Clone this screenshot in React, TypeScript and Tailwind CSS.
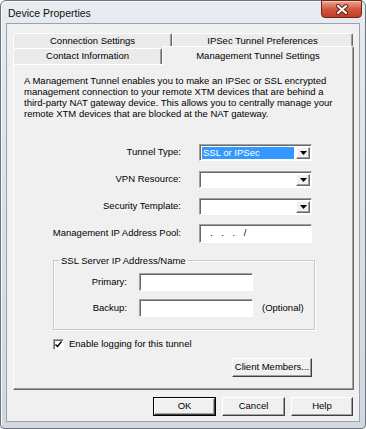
import React from "react";

const raised =
  "border border-t-white border-l-white border-r-[#696969] border-b-[#696969] shadow-[inset_-1px_-1px_0_#a0a0a0]";
const sunken =
  "border border-t-[#a0a0a0] border-l-[#a0a0a0] border-r-white border-b-white shadow-[inset_1px_1px_0_#696969]";

function Arrow() {
  return (
    <svg width="7" height="4" viewBox="0 0 7 4">
      <path d="M0 0h7L3.5 4z" fill="#000" />
    </svg>
  );
}

function Combo({ value }: { value?: string }) {
  return (
    <div className={`${sunken} bg-white h-[17px] w-[113px] flex pl-[2px] pr-[1px] pt-[2px] pb-[1px]`}>
      <div className="flex-1 flex pr-[2px]">
        {value && (
          <span className="bg-[#3399ff] text-white w-full flex items-center pl-[1px] leading-none">{value}</span>
        )}
      </div>
      <div className={`${raised} w-[14px] bg-[#f0f0f0] flex items-center justify-center`}>
        <Arrow />
      </div>
    </div>
  );
}

function Field({ w, h = 19, children }: { w: number; h?: number; children?: React.ReactNode }) {
  return (
    <div
      className={`${sunken} bg-white flex items-center pl-[10px] ${h === 19 ? "h-[19px]" : "h-[18px]"} ${
        w === 113 ? "w-[113px]" : "w-[114px]"
      }`}
    >
      {children}
    </div>
  );
}

function Button({ label, width, isDefault }: { label: string; width: string; isDefault?: boolean }) {
  return (
    <div className={`${width} h-[19px] ${isDefault ? "border border-black" : ""}`}>
      <div
        className={`h-full w-full bg-[#f0f0f0] flex items-center justify-center border border-t-white border-l-white border-r-[#404040] border-b-[#404040] shadow-[inset_-1px_-1px_0_#a0a0a0]`}
      >
        {label}
      </div>
    </div>
  );
}

function Tab({ label, width, selected }: { label: string; width: string; selected?: boolean }) {
  return (
    <div
      className={`${width} flex justify-center rounded-t-[2px] border border-b-0 border-t-white border-l-white border-r-[#696969] shadow-[inset_-1px_0_0_#a0a0a0] ${
        selected
          ? "h-[19px] -mt-[2px] relative z-10 bg-[#f0f0f0] pt-[2px]"
          : "h-full bg-[#ebebeb] items-center"
      }`}
    >
      {label}
    </div>
  );
}

function FormRow({ label, children, height }: { label: string; children: React.ReactNode; height: string }) {
  return (
    <div className={`flex items-center ${height}`}>
      <div className="w-[167px] text-right">{label}</div>
      <div className="ml-[18px]">{children}</div>
    </div>
  );
}

export default function App() {
  return (
    <div className="w-[366px] h-[429px] font-['Liberation_Sans',Arial,sans-serif] text-[9.5px] text-black">
      <div className="h-full w-full rounded-t-[6px] rounded-b-[4px] border border-[#6b7480] bg-gradient-to-b from-[#e8ebef] via-[#dde1e6] to-[#d3d8de] flex flex-col shadow-[inset_1px_1px_0_#f8f9fa]">
        {/* title bar */}
        <div className="h-[22px] flex items-start pl-[7px] pr-[3px]">
          <span className="mt-[5px] leading-[15px] text-[10.5px] text-[#111]">Device Properties</span>
          <div className="ml-auto -mt-[1px] w-[41px] h-[18px] rounded-b-[4px] border border-[#6e2414] bg-gradient-to-b from-[#e9a893] via-[#d2573d] to-[#c23d22] flex items-center justify-center shadow-[inset_0_1px_0_#f3c9bb]">
            <svg width="14" height="11" viewBox="0 0 14 11">
              <path d="M3 2l8 7M11 2L3 9" stroke="#5a1a10" strokeWidth="4" strokeLinecap="round" />
              <path d="M3 2l8 7M11 2L3 9" stroke="#fff" strokeWidth="2.2" strokeLinecap="round" />
            </svg>
          </div>
        </div>

        {/* client area */}
        <div className="mx-[5px] h-[399px] border border-[#9aa3ad] bg-[#f0f0f0] flex flex-col">
          <div className="ml-[6px] mt-[9px] w-[341px]">
            {/* tab rows */}
            <div className="flex h-[15px]">
              <Tab label="Connection Settings" width="w-[159px]" />
              <Tab label="IPSec Tunnel Preferences" width="w-[181px]" />
            </div>
            <div className="flex h-[16px]">
              <Tab label="Contact Information" width="w-[149px]" />
              <Tab label="Management Tunnel Settings" width="w-[192px]" selected />
            </div>

            {/* panel */}
            <div className="h-[326px] border border-t-white border-l-white border-r-[#696969] border-b-[#696969] shadow-[inset_-1px_-1px_0_#a0a0a0] bg-[#f0f0f0] flex flex-col">
              <p className="ml-[10px] mt-[10px] leading-[11px] whitespace-nowrap">
                A Management Tunnel enables you to make an IPSec or SSL encrypted
                <br />
                management connection to your remote XTM devices that are behind a
                <br />
                third-party NAT gateway device. This allows you to centrally manage your
                <br />
                remote XTM devices that are blocked at the NAT gateway.
              </p>

              <div className="mt-[25px]">
                <FormRow label="Tunnel Type:" height="h-[17px]">
                  <Combo value="SSL or IPSec" />
                </FormRow>
              </div>
              <div className="mt-[10px]">
                <FormRow label="VPN Resource:" height="h-[17px]">
                  <Combo />
                </FormRow>
              </div>
              <div className="mt-[10px]">
                <FormRow label="Security Template:" height="h-[17px]">
                  <Combo />
                </FormRow>
              </div>
              <div className="mt-[9px]">
                <FormRow label="Management IP Address Pool:" height="h-[19px]">
                  <Field w={113}>
                    <span className="tracking-[3px]">. . . /</span>
                  </Field>
                </FormRow>
              </div>

              {/* group box */}
              <fieldset className="ml-[39px] mt-[11px] w-[262px] h-[76px] border border-[#c8c8c8] shadow-[1px_1px_0_#fff,inset_1px_1px_0_#fff]">
                <legend className="ml-[6px] px-[1px] leading-[13px]">SSL Server IP Address/Name</legend>
                <div className="mt-[6px] flex items-center h-[18px]">
                  <div className="w-[73px] text-right">Primary:</div>
                  <div className="ml-[12px]">
                    <Field w={114} h={18} />
                  </div>
                </div>
                <div className="mt-[8px] flex items-center h-[18px]">
                  <div className="w-[73px] text-right">Backup:</div>
                  <div className="ml-[12px]">
                    <Field w={114} h={18} />
                  </div>
                  <span className="ml-[9px]">(Optional)</span>
                </div>
              </fieldset>

              {/* checkbox */}
              <div className="ml-[39px] mt-[9px] flex items-center h-[11px]">
                <div className={`${sunken} w-[11px] h-[11px] bg-white flex items-center justify-center`}>
                  <svg width="7" height="7" viewBox="0 0 7 7">
                    <path d="M0.5 3.5l2 2 4-5" stroke="#000" strokeWidth="1.4" fill="none" />
                  </svg>
                </div>
                <span className="ml-[5px]">Enable logging for this tunnel</span>
              </div>

              <div className="ml-[218px] mt-[8px]">
                <Button label="Client Members..." width="w-[80px]" />
              </div>
            </div>
          </div>

          {/* dialog buttons */}
          <div className="mt-[7px] mr-[6px] flex justify-end gap-[6px]">
            <Button label="OK" width="w-[63px]" isDefault />
            <Button label="Cancel" width="w-[63px]" />
            <Button label="Help" width="w-[62px]" />
          </div>
        </div>
      </div>
    </div>
  );
}
